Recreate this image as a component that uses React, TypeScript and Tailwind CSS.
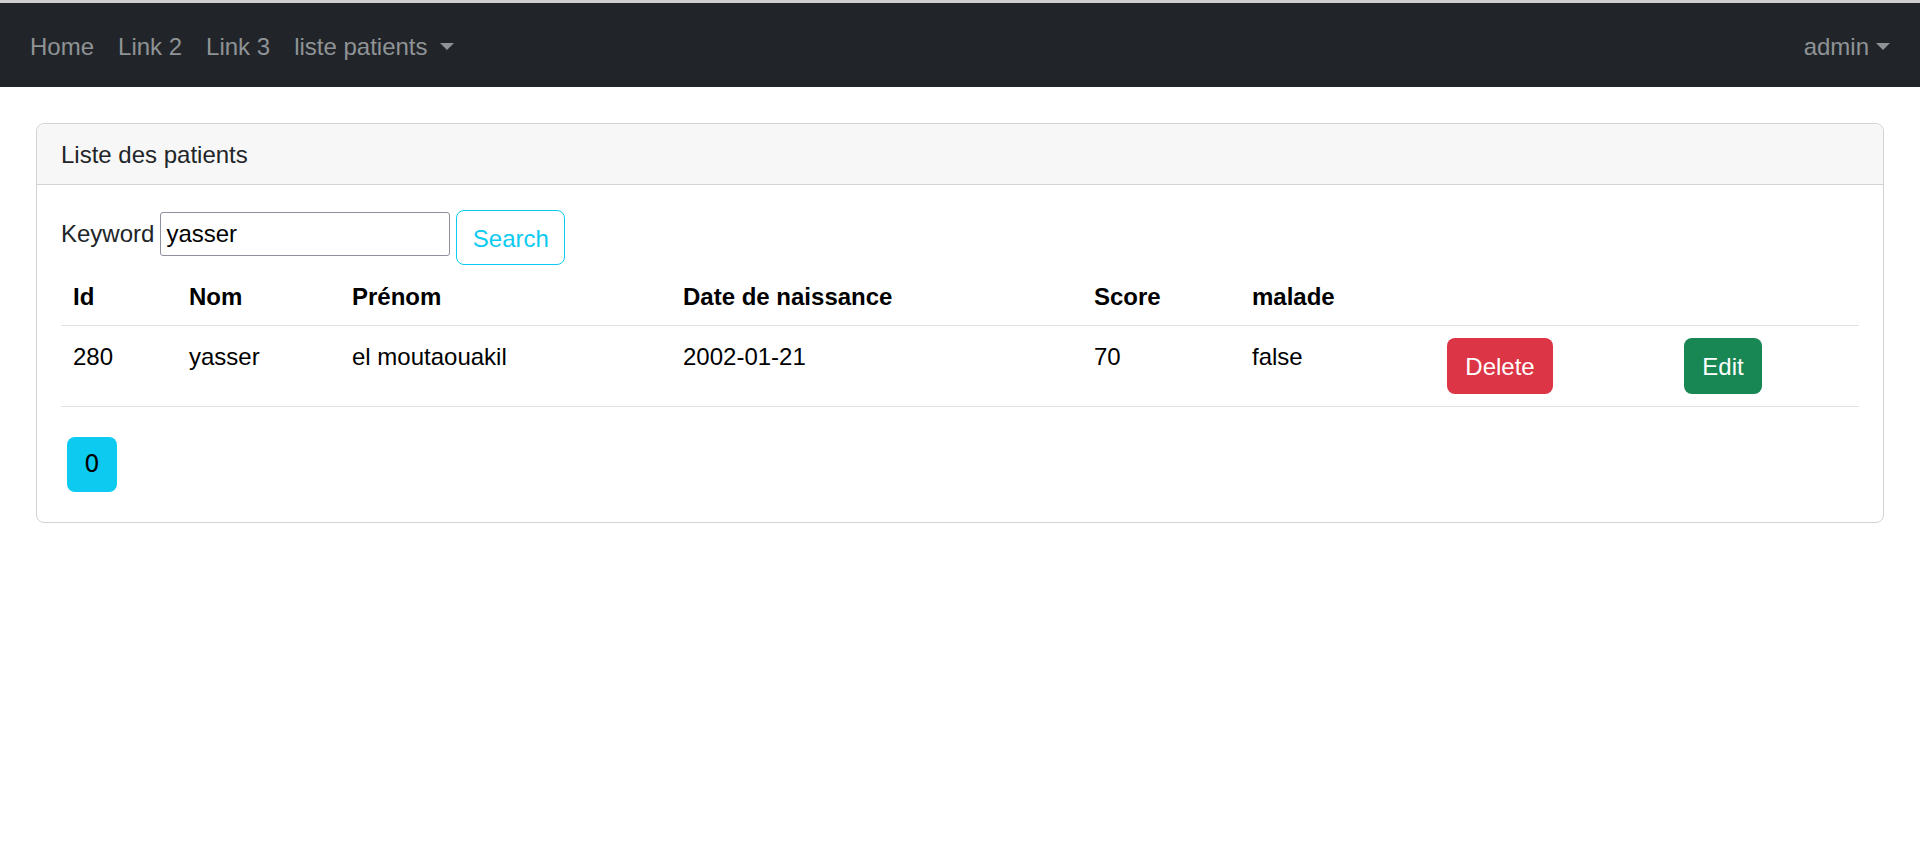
import React from "react"

const font = { fontFamily: '"Liberation Sans", Arial, sans-serif' }

function Caret({ gap }: { gap: string }) {
  return (
    <span
      className={`${gap} inline-block h-0 w-0 border-x-[7px] border-t-[7px] border-x-transparent border-t-current align-[0.2em]`}
    />
  )
}

const cols = [
  { label: "Id", w: "w-[116px]" },
  { label: "Nom", w: "w-[163px]" },
  { label: "Prénom", w: "w-[331px]" },
  { label: "Date de naissance", w: "w-[411px]" },
  { label: "Score", w: "w-[158px]" },
  { label: "malade", w: "w-[195px]" },
  { label: "", w: "w-[237px]" },
  { label: "", w: "w-[187px]" },
]

const patients = [
  { id: 280, nom: "yasser", prenom: "el moutaouakil", date: "2002-01-21", score: 70, malade: "false" },
]

export default function App() {
  return (
    <div className="min-h-[854px] bg-white text-[24px] text-[#212529]" style={font}>
      <div className="h-[3px] bg-[#cfcfcf]" />
      <nav className="flex h-[84px] items-center justify-between bg-[#212529] px-[18px] pt-[4px] text-[#909396]">
        <div className="flex items-center">
          <a className="px-[12px] leading-[36px]">Home</a>
          <a className="px-[12px] leading-[36px]">Link 2</a>
          <a className="px-[12px] leading-[36px]">Link 3</a>
          <a className="px-[12px] leading-[36px]">
            liste patients
            <Caret gap="ml-[12px]" />
          </a>
        </div>
        <a className="px-[12px] leading-[36px]">
          admin
          <Caret gap="ml-[7px]" />
        </a>
      </nav>

      <div className="px-[36px] pt-[36px]">
        <div className="rounded-[8px] border border-[#d3d3d4]">
          <div className="flex h-[61px] items-center rounded-t-[8px] border-b border-[#d3d3d4] bg-[#f7f7f7] px-[24px] pt-[2px]">
            Liste des patients
          </div>
          <div className="p-[24px]">
            <div className="flex h-[56px] items-start">
              <label className="mt-[3px] mr-[6px] leading-[44px]">Keyword</label>
              <input
                defaultValue="yasser"
                className="mt-[3px] h-[44px] w-[290px] rounded-[3px] border border-[#8f8f9d] px-[5px] text-[24px] text-black outline-none"
                style={font}
              />
              <button className="mt-[1px] ml-[6px] h-[55px] w-[109px] rounded-[8px] border border-[#0dcaf0] pt-[3px] text-[#0dcaf0]">
                Search
              </button>
            </div>

            <table className="w-full table-fixed border-collapse text-black">
              <thead>
                <tr className="border-b border-[#dee2e6]">
                  {cols.map((c, i) => (
                    <th key={i} className={`${c.w} h-[60px] px-[12px] pt-[14px] text-left align-top leading-[36px] font-bold`}>
                      {c.label}
                    </th>
                  ))}
                </tr>
              </thead>
              <tbody>
                {patients.map((p) => (
                  <tr key={p.id} className="border-b border-[#dee2e6]">
                    <td className="h-[81px] px-[12px] pt-[13px] align-top leading-[36px]">{p.id}</td>
                    <td className="px-[12px] pt-[13px] align-top leading-[36px]">{p.nom}</td>
                    <td className="px-[12px] pt-[13px] align-top leading-[36px]">{p.prenom}</td>
                    <td className="px-[12px] pt-[13px] align-top leading-[36px]">{p.date}</td>
                    <td className="px-[12px] pt-[13px] align-top leading-[36px]">{p.score}</td>
                    <td className="px-[12px] pt-[13px] align-top leading-[36px]">{p.malade}</td>
                    <td className="px-[12px] pt-[12px] align-top">
                      <button className="h-[56px] w-[106px] rounded-[8px] bg-[#dc3545] pt-[3px] text-white">Delete</button>
                    </td>
                    <td className="px-[12px] pt-[12px] align-top">
                      <button className="h-[56px] w-[78px] rounded-[8px] bg-[#198754] pt-[3px] text-white">Edit</button>
                    </td>
                  </tr>
                ))}
              </tbody>
            </table>

            <div className="mt-[24px] flex">
              <button
                className="m-[6px] h-[55px] w-[50px] rounded-[8px] bg-[#0dcaf0] text-[24px] text-black"
                style={{ fontFamily: '"DejaVu Sans", sans-serif' }}
              >
                0
              </button>
            </div>
          </div>
        </div>
      </div>
    </div>
  )
}
